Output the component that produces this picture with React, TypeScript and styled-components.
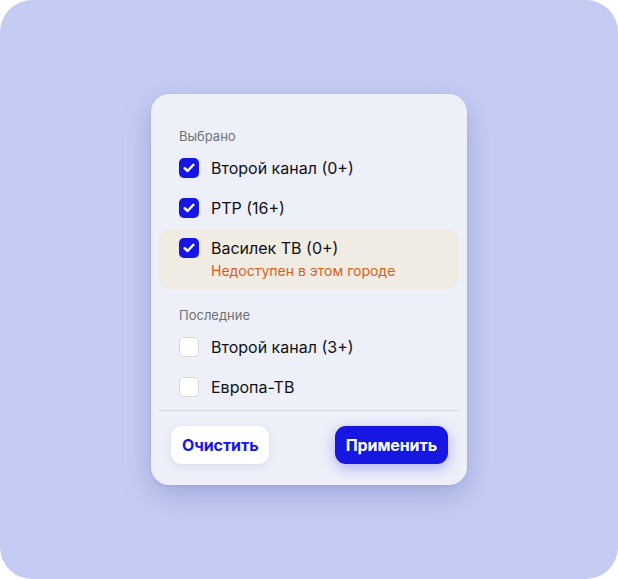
import React, { FC } from 'react'
import styled, { createGlobalStyle } from 'styled-components'

const GlobalStyle = createGlobalStyle`
  html, body {
    margin: 0;
    padding: 0;
    background: #ffffff;
  }
  body {
    font-family: Inter, 'Noto Sans', 'Liberation Sans', sans-serif;
    -webkit-font-smoothing: antialiased;
  }
`

const Frame = styled.div`
  width: 618px;
  height: 579px;
  border-radius: 32px;
  background: #c5ccf4;
  display: flex;
  align-items: center;
  justify-content: center;
`

const Card = styled.div`
  width: 316px;
  box-sizing: border-box;
  padding: 34px 8px 21px;
  background: #edf0f9;
  border-radius: 18px;
  box-shadow: 0 10px 28px rgba(70, 80, 150, 0.28), 0 1px 3px rgba(70, 80, 150, 0.12);
  display: flex;
  flex-direction: column;
`

const Section = styled.div<{ $spaced?: boolean }>`
  display: flex;
  flex-direction: column;
  margin-top: ${(p) => (p.$spaced ? '18px' : '0')};
`

const SectionLabel = styled.div`
  padding: 0 20px;
  font-size: 13px;
  line-height: 16px;
  color: #707074;
  margin-bottom: 4px;
`

const Row = styled.label<{ $warn?: boolean }>`
  display: flex;
  align-items: flex-start;
  gap: 12px;
  padding: ${(p) => (p.$warn ? '8px 20px' : '10px 20px')};
  border-radius: 12px;
  background: ${(p) => (p.$warn ? '#f0ebe3' : 'transparent')};
  margin-top: ${(p) => (p.$warn ? '1px' : '0')};
  cursor: pointer;
`

const Box = styled.span<{ $checked?: boolean; $warn?: boolean }>`
  flex: none;
  width: 20px;
  height: 20px;
  box-sizing: border-box;
  border-radius: 5px;
  margin-top: ${(p) => (p.$warn ? '1px' : '0')};
  display: flex;
  align-items: center;
  justify-content: center;
  background: ${(p) => (p.$checked ? '#1717e3' : '#ffffff')};
  border: ${(p) => (p.$checked ? 'none' : '1.5px solid #d6d7dd')};
`

const Texts = styled.div`
  display: flex;
  flex-direction: column;
`

const Title = styled.span<{ $warn?: boolean }>`
  font-size: 16px;
  line-height: ${(p) => (p.$warn ? '22px' : '20px')};
  color: #111114;
`

const Note = styled.span`
  font-size: 14px;
  line-height: 20px;
  color: #d5621c;
  margin-top: 2px;
`

const Divider = styled.div`
  height: 1px;
  background: #d7d8de;
  margin-top: 3px;
`

const Footer = styled.div`
  display: flex;
  justify-content: space-between;
  padding: 15px 11px 0 12px;
`

const Button = styled.button<{ $primary?: boolean }>`
  height: 38px;
  padding: 0 11px;
  border: none;
  border-radius: 11px;
  font-family: Inter, 'Noto Sans', 'Liberation Sans', sans-serif;
  font-size: 16px;
  font-weight: 700;
  letter-spacing: -0.1px;
  cursor: pointer;
  background: ${(p) => (p.$primary ? '#1717e3' : '#ffffff')};
  color: ${(p) => (p.$primary ? '#ffffff' : '#1717e3')};
  box-shadow: ${(p) =>
    p.$primary ? '0 4px 14px rgba(23, 23, 227, 0.3)' : '0 3px 10px rgba(90, 100, 170, 0.12)'};
`

const Check: FC = () => (
  <svg width='12' height='10' viewBox='0 0 12 10' fill='none'>
    <path d='M1.6 5.2 L4.6 8 L10.4 1.8' stroke='#ffffff' strokeWidth='2.4' strokeLinecap='round' strokeLinejoin='round' />
  </svg>
)

type Item = { title: string; checked: boolean; note?: string }

const selected: Item[] = [
  { title: 'Второй канал (0+)', checked: true },
  { title: 'РТР (16+)', checked: true },
  { title: 'Василек ТВ (0+)', checked: true, note: 'Недоступен в этом городе' },
]

const recent: Item[] = [
  { title: 'Второй канал (3+)', checked: false },
  { title: 'Европа-ТВ', checked: false },
]

const Option: FC<{ item: Item }> = ({ item }) => {
  const warn = !!item.note
  return (
    <Row $warn={warn}>
      <Box $checked={item.checked} $warn={warn}>
        {item.checked && <Check />}
      </Box>
      <Texts>
        <Title $warn={warn}>{item.title}</Title>
        {item.note && <Note>{item.note}</Note>}
      </Texts>
    </Row>
  )
}

const App: FC = () => {
  return (
    <>
      <GlobalStyle />
      <Frame>
        <Card>
          <Section>
            <SectionLabel>Выбрано</SectionLabel>
            {selected.map((it) => (
              <Option key={it.title} item={it} />
            ))}
          </Section>
          <Section $spaced>
            <SectionLabel>Последние</SectionLabel>
            {recent.map((it) => (
              <Option key={it.title} item={it} />
            ))}
          </Section>
          <Divider />
          <Footer>
            <Button>Очистить</Button>
            <Button $primary>Применить</Button>
          </Footer>
        </Card>
      </Frame>
    </>
  )
}

export default App
